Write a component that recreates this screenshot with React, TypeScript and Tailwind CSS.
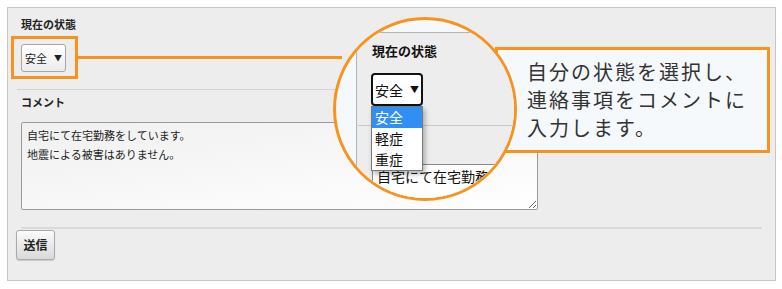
import React from 'react';

const jp = { fontFamily: '"Noto Sans CJK JP", "Noto Sans", sans-serif' };

function MagnifiedView() {
  // zoomed-in copy of the form, shown inside the circle
  return (
    <div className="absolute left-[333px] top-[17px] z-20 h-[184px] w-[184px] overflow-hidden rounded-full border-[3px] border-[#f7931e] bg-[#f5f9fc]">
      <div className="absolute left-[20px] top-[12px] h-[300px] w-[300px] border-l border-t border-[#b3b3b3] bg-[#ededed]" />
      <div className="absolute left-[36px] top-[23px] text-[13px] font-bold leading-[16px] text-[#111]">現在の状態</div>
      <div className="absolute left-[20px] top-[105px] h-px w-[300px] bg-[#c9c9c9]" />
      <div className="absolute left-[36px] top-[144px] h-[70px] w-[200px] border border-[#8a8a8a] bg-white pl-[4px] pt-[2px] text-[14px] leading-[19px] text-[#111]">
        <div>自宅にて在宅勤務をしています。</div>
        <div>地震による被害はありません。</div>
      </div>
      <div className="absolute left-[35px] top-[53px] flex h-[33px] w-[52px] items-center rounded-[4px] border-2 border-[#111] bg-white pl-[2px] text-[14px] leading-[18px] text-[#111]">
        <span>安全</span>
        <span className="ml-[7px] text-[9px]">▼</span>
      </div>
      <div className="absolute left-[35px] top-[86px] w-[52px] border border-[#7a7a7a] bg-white text-[14px] leading-[21px] text-[#111] shadow-[2px_3px_5px_rgba(0,0,0,0.3)]">
        <div className="bg-[#2f8ff5] pl-[3px] text-white">安全</div>
        <div className="pl-[3px]">軽症</div>
        <div className="pl-[3px]">重症</div>
      </div>
    </div>
  );
}

export default function App() {
  return (
    <div className="relative h-[289px] w-[782px] overflow-hidden bg-white" style={jp}>
      <div className="ml-[7px] mt-[7px] flex h-[274px] w-[769px] flex-col border border-[#c6c6c6] bg-[#ededed] text-[#222]">
        <div className="ml-[13px] mt-[9px] text-[11px] font-bold leading-[14px]">現在の状態</div>
        <div className="ml-[13px] mt-[13px] flex h-[28px] w-[45px] items-center rounded-[3px] border border-[#a6a6a6] bg-gradient-to-b from-white to-[#ececec] pl-[3px] text-[11px] leading-[14px]">
          <span>安全</span>
          <span className="ml-[7px] text-[8px]">▼</span>
        </div>
        <div className="ml-[9px] mt-[17px] h-px w-[745px] bg-[#d2d2d2]" />
        <div className="ml-[13px] mt-[5px] text-[11px] font-bold leading-[14px]">コメント</div>
        <textarea
          readOnly
          defaultValue={'自宅にて在宅勤務をしています。\n地震による被害はありません。'}
          className="ml-[13px] mt-[13px] h-[88px] w-[517px] rounded-[2px] border border-[#9a9a9a] bg-gradient-to-br from-[#f0f0f0] to-white px-[5px] pt-[3px] text-[11px] leading-[19px] text-[#222] outline-none"
          style={jp}
        />
        <div className="ml-[13px] mt-[17px] h-[2px] w-[741px] bg-[#dadada]" />
        <button className="ml-[8px] mt-[1px] h-[30px] w-[39px] rounded-[3px] border border-[#a9a9a9] bg-gradient-to-b from-[#fbfbfb] to-[#d9d9d9] text-[12px] font-bold leading-[14px] text-[#222] shadow-[0_1px_1px_rgba(0,0,0,0.15)]">
          送信
        </button>
      </div>

      {/* annotations */}
      <div className="absolute left-[11px] top-[36px] h-[43px] w-[67px] border-[3px] border-[#f7931e]" />
      <div className="absolute left-[77px] top-[56px] h-[3px] w-[265px] bg-[#f7931e]" />
      <div className="absolute left-[495px] top-[47px] z-10 h-[106px] w-[275px] border-[3px] border-[#f7931e] bg-[#f5f9fc] pl-[29px] pt-[8px] text-[20px] leading-[28px] tracking-[2px] text-[#333]">
        <div>自分の状態を選択し、</div>
        <div>連絡事項をコメントに</div>
        <div>入力します。</div>
      </div>
      <MagnifiedView />
    </div>
  );
}
